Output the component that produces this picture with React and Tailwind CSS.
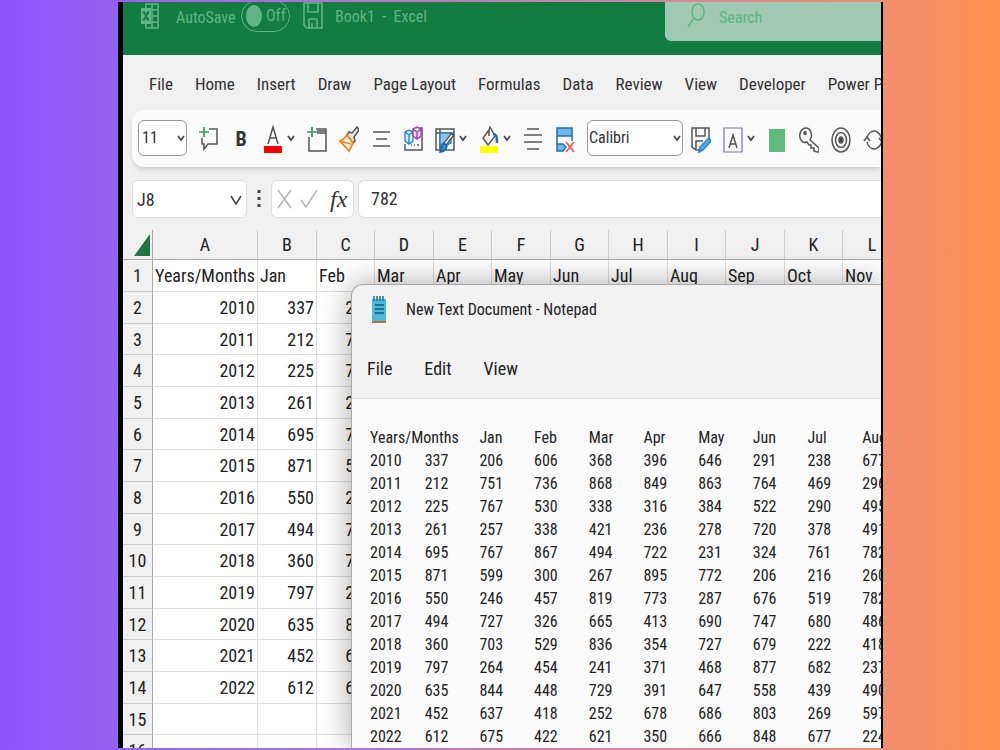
const TABS = ['File', 'Home', 'Insert', 'Draw', 'Page Layout', 'Formulas', 'Data', 'Review', 'View', 'Developer', 'Power Pivot'];

const MONTHS = ['Jan', 'Feb', 'Mar', 'Apr', 'May', 'Jun', 'Jul', 'Aug', 'Sep', 'Oct', 'Nov'];

const COLUMNS = [
  { letter: 'A', width: 'w-[105px]' },
  { letter: 'B', width: 'w-[59px]' },
  { letter: 'C', width: 'w-[58px]' },
  { letter: 'D', width: 'w-[59px]' },
  { letter: 'E', width: 'w-[58px]' },
  { letter: 'F', width: 'w-[59px]' },
  { letter: 'G', width: 'w-[58px]' },
  { letter: 'H', width: 'w-[59px]' },
  { letter: 'I', width: 'w-[58px]' },
  { letter: 'J', width: 'w-[59px]' },
  { letter: 'K', width: 'w-[58px]' },
  { letter: 'L', width: 'w-[59px]' },
];

// year followed by Jan..Sep
const DATA = [
  [2010, 337, 206, 606, 368, 396, 646, 291, 238, 677],
  [2011, 212, 751, 736, 868, 849, 863, 764, 469, 296],
  [2012, 225, 767, 530, 338, 316, 384, 522, 290, 495],
  [2013, 261, 257, 338, 421, 236, 278, 720, 378, 491],
  [2014, 695, 767, 867, 494, 722, 231, 324, 761, 782],
  [2015, 871, 599, 300, 267, 895, 772, 206, 216, 260],
  [2016, 550, 246, 457, 819, 773, 287, 676, 519, 782],
  [2017, 494, 727, 326, 665, 413, 690, 747, 680, 486],
  [2018, 360, 703, 529, 836, 354, 727, 679, 222, 418],
  [2019, 797, 264, 454, 241, 371, 468, 877, 682, 237],
  [2020, 635, 844, 448, 729, 391, 647, 558, 439, 490],
  [2021, 452, 637, 418, 252, 678, 686, 803, 269, 597],
  [2022, 612, 675, 422, 621, 350, 666, 848, 677, 224],
];

// the notepad window covers everything right of column C
const SHEET = [['Years/Months', ...MONTHS], ...DATA.map((row) => row.slice(0, 3)), [], []];

function Chevron({ className = 'w-2 h-[30px]' }) {
  return (
    <svg viewBox="0 0 8 8" className={className} fill="none" stroke="#444" strokeWidth="1.7">
      <path d="M1 2l3 4 3-4" />
    </svg>
  );
}

function Tool({ label, split, children }) {
  return (
    <button aria-label={label} className="flex items-center gap-1 shrink-0">
      <svg viewBox="0 -4 20 30" className="w-5 h-[30px]" fill="none" stroke="#555" strokeWidth="1.5">
        {children}
      </svg>
      {split && <Chevron />}
    </button>
  );
}

function TitleBar() {
  return (
    <header className="flex h-[53px] bg-[#127c41] text-[#5fb585] text-base leading-5">
      <div className="flex items-start grow pl-[17px]">
        <svg viewBox="0 0 20 26" className="w-5 h-[26px] mt-px" fill="none" stroke="#5fb585" strokeWidth="1.6">
          <path d="M6 5V1h12v24H6v-4M12 1v24M12 7h6M12 13h6M12 19h6" />
          <path d="M1 5h10v16H1z" fill="#5fb585" stroke="none" />
          <path d="M3.5 8.5l5 9M8.5 8.5l-5 9" stroke="#127c41" strokeWidth="2" />
        </svg>
        <label className="flex items-center ml-4 mt-[-2px]">
          <span className="w-[57px] pt-[3px]">AutoSave</span>
          <input type="checkbox" className="peer sr-only" />
          <span className="flex items-center gap-1 ml-2 pl-1 w-[49px] h-8 rounded-full border border-[#5fb585]">
            <span className="w-4 h-[22px] rounded-[50%] bg-[#5fb585]" />
            <span>Off</span>
          </span>
        </label>
        <button aria-label="Save" className="ml-[13px]">
          <svg viewBox="0 0 20 28" className="w-5 h-7" fill="none" stroke="#5fb585" strokeWidth="1.6">
            <path d="M1 1h18v25H4l-3-3zM5 1v9h10V1M6 26v-9h8v9M9 21v5" />
          </svg>
        </button>
        <h1 className="ml-3 mt-[5px] whitespace-pre">Book1  -  Excel</h1>
      </div>
      <label className="flex items-start gap-[14px] w-[216px] h-[39px] pl-[22px] pt-px rounded-bl-md bg-[#a0c9b3]">
        <svg viewBox="0 0 18 26" className="w-[18px] h-[26px] shrink-0" fill="none" stroke="#5fb585" strokeWidth="1.6">
          <ellipse cx="11" cy="9" rx="6" ry="8" />
          <path d="M7 15L1 24" />
        </svg>
        <input
          type="text"
          aria-label="Search"
          placeholder="Search"
          className="min-w-0 w-full h-7 bg-transparent placeholder-[#5fb585] outline-none"
        />
      </label>
    </header>
  );
}

function Toolbar() {
  return (
    <div className="flex items-center gap-3 h-[57px] ml-[9px] pl-[6px] pb-[2px] rounded-l-xl bg-[#fafafa] shadow-md">
      <div className="relative w-[49px] shrink-0">
        <select aria-label="Font size" className="w-full h-9 pl-[3px] appearance-none rounded-md border border-[#999] bg-white text-base">
          <option>11</option>
        </select>
        <Chevron className="absolute right-[2px] top-[14px] w-2 h-2 pointer-events-none" />
      </div>
      <Tool label="New comment">
        <path d="M10 2h8v15H9l-4 5v-5H3v-6" />
        <path d="M5 0v10M0 5h10" stroke="#2e9e55" strokeWidth="1.7" />
      </Tool>
      <button aria-label="Bold" className="w-5 shrink-0 pt-[3px] text-xl font-bold">B</button>
      <Tool label="Font colour" split>
        <path d="M5 17L10 0l5 17M7 11h6" />
        <path d="M1 19h18v7H1z" fill="#fe0000" stroke="none" />
      </Tool>
      <Tool label="New window">
        <path d="M9 2h10v22H2V10M10 6h9M10 4h9" />
        <path d="M5 0v10M0 5h10" stroke="#2e9e55" strokeWidth="1.7" />
      </Tool>
      <Tool label="Format painter">
        <path d="M18 0l2 3-5 7 1 4-2 2-6-8 2-3 3 1z" fill="#e8e8e8" />
        <path d="M8 8l6 8-4 8-9-10c3-1 5-3 7-6zM1 14l11 3" fill="#fdf0dc" stroke="#e58a2c" strokeWidth="1.8" />
      </Tool>
      <Tool label="Align centre">
        <path d="M2 5h17M5 12h11M2 19h17" />
      </Tool>
      <Tool label="3D models">
        <path d="M17 1h2v22H2v-6M8 18h1M11 18h1M14 18h2" />
        <path d="M2 5l4-2 4 2v9l-4 3-4-3zM2 5l4 3 4-3M6 8v9" fill="#d9effc" stroke="#2992d6" />
        <path d="M10 2l4-2 4 2v7l-4 3-4-3zM10 2l4 3 4-3M14 5v7" fill="#f3dff6" stroke="#a846b8" />
      </Tool>
      <Tool label="Format table" split>
        <path d="M1 2h18v21H1zM1 6h18M5 2v21" />
        <path d="M5 6h11v10L7 20H5z" fill="#8dc5ee" stroke="#2f80bd" />
        <path d="M18 7L9 18" strokeWidth="4" stroke="#444" />
        <path d="M17 8l-7 9" stroke="#fff" />
        <path d="M9 16l3 3c-1 4-3 6-7 6 1-3 0-7 4-9z" fill="#2f88ca" stroke="#1765a0" />
      </Tool>
      <Tool label="Fill colour" split>
        <path d="M10 3L4 11l5 7 7-9-5-9-1 3v6" />
        <path d="M14 7c4 0 4 4 4 9" stroke="#2671b0" strokeWidth="2.5" />
        <path d="M1 19h18v7H1z" fill="#ffff00" stroke="none" />
      </Tool>
      <Tool label="Centre">
        <path d="M4 2h12M1 8h18M1 15h18M4 22h12" />
      </Tool>
      <Tool label="Delete row">
        <path d="M2 1h15v8H2zM2 17h6l3 3-3 4H2z" fill="#72b6ea" stroke="#1f73b5" />
        <path d="M2 9v8M17 9v5" stroke="#1f73b5" />
        <path d="M11 15l8 10M19 15l-8 10" stroke="#ee5b50" strokeWidth="1.8" />
      </Tool>
      <div className="relative w-24 -mr-1 shrink-0">
        <select aria-label="Font" className="w-full h-9 pl-px appearance-none rounded-md border border-[#999] bg-white text-base">
          <option>Calibri</option>
        </select>
        <Chevron className="absolute right-[2px] top-[14px] w-2 h-2 pointer-events-none" />
      </div>
      <Tool label="Save as">
        <path d="M9 23H5l-4-3V1h17v10M5 1v8h9V1M5 22v-8h7" />
        <path d="M18 11l2 3-8 9-4 2 1-5z" fill="#5cb0ee" stroke="#2580c4" />
      </Tool>
      <Tool label="Text box" split>
        <path d="M1 1h18v24H1z" stroke="#7077a8" strokeWidth="1.2" />
        <path d="M6 21L10 8l4 13M7.5 17h5" />
      </Tool>
      <Tool label="Shape fill">
        <path d="M2 2h16v23H2z" fill="#5fba7d" stroke="none" />
      </Tool>
      <Tool label="Permissions">
        <path d="M11 13c3-4 1-12-4-12S-1 8 2 13c2 3 4 3 6 2l2 3h2v3h3v3l3 1h2v-4z" />
        <ellipse cx="6" cy="6" rx="1" ry="1.5" fill="#444" />
      </Tool>
      <Tool label="Record">
        <ellipse cx="10" cy="13" rx="9" ry="12" />
        <ellipse cx="10" cy="13" rx="5.5" ry="7.5" />
        <ellipse cx="10" cy="13" rx="2" ry="3" fill="#444" />
      </Tool>
      <Tool label="Refresh">
        <path d="M4 11c1-4 4-7 7-7s7 3 8 9M4 15c1 4 4 7 7 7s7-3 8-8M1 14l3-4 3 4M16 11l3 4 3-4" />
      </Tool>
    </div>
  );
}

function FormulaBar() {
  return (
    <div className="flex h-[38px] mt-[13px] ml-[9px] text-lg">
      <div className="relative w-[115px] shrink-0">
        <input type="text" aria-label="Name box" defaultValue="J8" className="w-full h-full pl-1 rounded-md border border-[#ddd] bg-white" />
        <svg viewBox="0 0 12 10" className="absolute right-[5px] top-[15px] w-3 h-[10px]" fill="none" stroke="#444" strokeWidth="1.5">
          <path d="M1 1l5 8 5-8" />
        </svg>
      </div>
      <svg viewBox="0 0 4 20" className="w-1 h-5 mt-[9px] mx-[10px] shrink-0" fill="#444">
        <path d="M.5 1h3v3h-3zM.5 8h3v3h-3zM.5 15h3v3h-3z" />
      </svg>
      <div className="flex items-center gap-2 w-[83px] shrink-0 px-[5px] rounded-md border border-[#ddd] bg-white">
        <button aria-label="Cancel">
          <svg viewBox="0 0 15 20" className="w-[15px] h-5" fill="none" stroke="#b5b5b5" strokeWidth="1.5">
            <path d="M1 1l13 18M14 1L1 19" />
          </svg>
        </button>
        <button aria-label="Enter">
          <svg viewBox="0 0 18 20" className="w-[18px] h-5" fill="none" stroke="#b5b5b5" strokeWidth="1.5">
            <path d="M1 11l5 7L17 1" />
          </svg>
        </button>
        <button aria-label="Insert function" className="pl-1 font-['Liberation_Serif',serif] italic text-2xl leading-6">fx</button>
      </div>
      <input type="text" aria-label="Formula" defaultValue="782" className="grow min-w-0 ml-1 pl-3 rounded-l-md border border-r-0 border-[#ddd] bg-white" />
    </div>
  );
}

function Sheet() {
  return (
    <table className="table-fixed w-[779px] mt-3 border-separate border-spacing-0 text-lg leading-6 text-[#222]">
      <colgroup>
        <col className="w-[30px]" />
        {COLUMNS.map((c) => <col key={c.letter} className={c.width} />)}
      </colgroup>
      <thead>
        <tr className="h-[30px]">
          <th aria-label="Select all" className="p-0 border-r border-b border-[#aaa]">
            <svg viewBox="0 0 16 22" className="w-4 h-[22px] ml-[11px]" fill="#217346">
              <path d="M16 0v22H0z" />
            </svg>
          </th>
          {COLUMNS.map((c) => (
            <th key={c.letter} className="p-0 font-normal border-r border-b border-r-[#ccc] border-b-[#aaa]">{c.letter}</th>
          ))}
        </tr>
      </thead>
      <tbody className="bg-white">
        {SHEET.map((row, i) => (
          <tr key={i} className="h-8 nth-[3n]:h-[31px]">
            <th className="p-0 pt-px font-normal bg-[#f0f0f0] border-r border-b border-r-[#aaa] border-b-[#ccc]">{i + 1}</th>
            {COLUMNS.map((c, j) => (
              <td key={c.letter} className={`p-0 pt-px px-[2px] whitespace-nowrap border-r border-b border-[#ddd] ${i === 0 ? 'text-left' : 'text-right'}`}>
                {row[j]}
              </td>
            ))}
          </tr>
        ))}
      </tbody>
    </table>
  );
}

function Notepad() {
  return (
    <section className="absolute left-[228px] right-0 top-[282px] bottom-0 flex flex-col overflow-hidden rounded-tl-xl border-t border-l border-[#aaa] bg-[#f2f2f2] shadow-[0_0_32px_rgba(0,0,0,0.35)] text-[#222]">
      <div className="flex items-center h-[52px] pl-5">
        <svg viewBox="0 0 14 28" className="w-[14px] h-7">
          <path d="M0 3h14v22H0z" fill="#4bb9dc" />
          <path d="M2 0v5M5 0v5M8 0v5M11 0v5" stroke="#226b91" strokeWidth="1.5" />
          <path d="M3 9h9M3 13h9M3 17h9" stroke="#155877" strokeWidth="1.5" />
          <path d="M0 25h14v2H0z" fill="#b87339" />
        </svg>
        <h2 className="ml-5 text-base">New Text Document - Notepad</h2>
      </div>
      <nav className="flex items-center gap-8 h-[68px] pt-[5px] pl-[15px] border-b border-[#ddd] text-lg leading-6">
        <button>File</button>
        <button>Edit</button>
        <button>View</button>
      </nav>
      <div className="grow pt-[27px] pl-[18px] bg-[#fafafa]">
        <table className="table-fixed w-[547px] text-base leading-[23px] text-left">
          <thead>
            <tr>
              <th colSpan={2} className="p-0 font-normal">Years/Months</th>
              {MONTHS.slice(0, 8).map((m) => <th key={m} className="p-0 font-normal">{m}</th>)}
            </tr>
          </thead>
          <tbody>
            {DATA.map((row) => (
              <tr key={row[0]}>
                {row.map((n, j) => <td key={j} className="p-0">{n}</td>)}
              </tr>
            ))}
          </tbody>
        </table>
      </div>
    </section>
  );
}

export default function App() {
  return (
    <main className="h-screen pl-[118px] pr-[117px] py-[2px] bg-linear-to-r from-[#8c52ff] to-[#ff914d] font-['Roboto_Condensed','Liberation_Sans_Narrow','Open_Sans',sans-serif]">
      <div className="relative h-full overflow-hidden border-l-[5px] border-r-2 border-black bg-[#f0f0f0] text-[#333]">
        <TitleBar />
        <nav className="flex items-center gap-[22px] h-[55px] pt-[5px] pl-[26px] text-[17px] whitespace-nowrap">
          {TABS.map((t) => <button key={t}>{t}</button>)}
        </nav>
        <Toolbar />
        <FormulaBar />
        <Sheet />
        <Notepad />
      </div>
    </main>
  );
}
